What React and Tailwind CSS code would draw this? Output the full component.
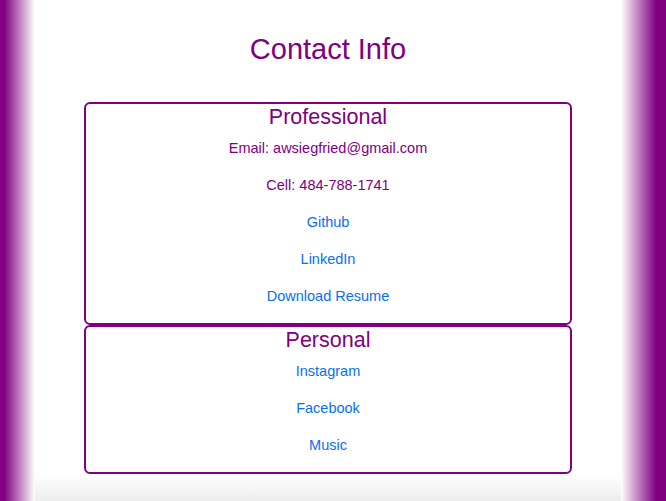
export default function App() {
  const font = { fontFamily: '"Liberation Sans", Arial, sans-serif' };
  const Item = ({ children, link }) => (
    <div className={`h-[37px] flex items-center justify-center text-[14.5px] ${link ? "text-[#0a6ff0]" : "text-[#800080]"}`}>
      {link ? <a href="#">{children}</a> : children}
    </div>
  );
  const Box = ({ title, children }) => (
    <div className="border-2 border-[#800080] rounded-[6px] pb-[7px]">
      <div className="h-[27px] flex items-center justify-center text-[21.5px] text-[#800080] pt-[1px]">{title}</div>
      {children}
    </div>
  );
  return (
    <div className="w-[666px] h-[501px] flex bg-white overflow-hidden" style={font}>
      <div className="w-[35px] shrink-0 bg-[linear-gradient(to_right,#800080_12%,#ffffff)]" />
      <div className="flex-1 flex flex-col">
        <h1 className="pt-[33px] text-[29px] leading-[33px] text-[#800080] text-center mb-[35.5px]">Contact Info</h1>
        <div className="mx-[49px] flex flex-col">
          <Box title="Professional">
            <Item>Email: awsiegfried@gmail.com</Item>
            <Item>Cell: 484-788-1741</Item>
            <Item link>Github</Item>
            <Item link>LinkedIn</Item>
            <Item link>Download Resume</Item>
          </Box>
          <Box title="Personal">
            <Item link>Instagram</Item>
            <Item link>Facebook</Item>
            <Item link>Music</Item>
          </Box>
        </div>
        <div className="flex-1 bg-[linear-gradient(to_bottom,#ffffff,#ededed)]" />
      </div>
      <div className="w-[45px] shrink-0 bg-[linear-gradient(to_left,#800080_22%,#ffffff)]" />
    </div>
  );
}
